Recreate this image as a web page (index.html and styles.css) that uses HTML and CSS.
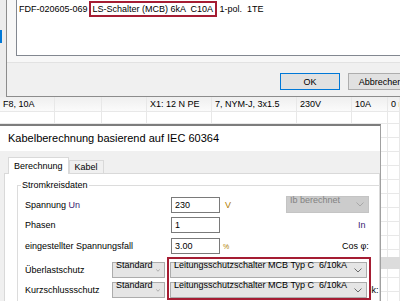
FILE: index.html
```html
<!DOCTYPE html>
<html lang="de">
<head>
  <meta charset="UTF-8" />
  <title>Kabelberechnung</title>
  <link rel="stylesheet" href="styles.css">
</head>
<body>

  <!-- Hintergrund: Tabelle der Hauptanwendung -->
  <div class="desk">
    <div class="desk-top"><span class="sel-mark"></span></div>
    <div class="grid-row first">
      <span>F8, 10A</span><span></span><span></span>
      <span>X1: 12 N PE</span><span>7, NYM-J, 3x1.5</span>
      <span>230V</span><span>10A</span><span>0 m</span>
    </div>
    <div class="grid-row second">
      <span></span><span></span><span></span><span></span>
      <span></span><span></span><span></span><span></span>
    </div>
    <div class="grid-fill">
      <span></span><span></span><span></span><span></span>
      <span></span><span></span><span></span><span></span>
    </div>
    <span class="desk-pill"></span>
  </div>

  <!-- Auswahl-Dialog -->
  <div class="dialog dlg-top">
    <div class="dlg-content">
      <div class="textbox">FDF-020605-069<span class="mark">LS-Schalter (MCB) 6kA  C10A</span> 1-pol.  1TE</div>
    </div>
    <div class="dlg-buttons">
      <button class="btn default">OK</button>
      <button class="btn">Abbrechen</button>
    </div>
  </div>

  <!-- Kabelberechnung -->
  <div class="dialog dlg-calc">
    <div class="calc-title">Kabelberechnung basierend auf IEC 60364</div>
    <div class="calc-body">
      <div class="tabs">
        <div class="tab active">Berechnung</div>
        <div class="tab">Kabel</div>
      </div>
      <div class="tab-page">
        <fieldset class="group">
          <legend>Stromkreisdaten</legend>

          <div class="row">
            <span class="label">Spannung <span class="sym">Un</span></span>
            <span class="input">230</span>
            <span class="unit">V</span>
            <span class="extra">
              <span class="combo disabled" style="margin-left:46px">Ib berechnet
                <svg width="8" height="5" viewBox="0 0 8 5"><path d="M0.5 0.5 L4 4 L7.5 0.5" fill="none" stroke="#a8a8a8"/></svg>
              </span>
            </span>
          </div>

          <div class="row">
            <span class="label">Phasen</span>
            <span class="input">1</span>
            <span class="unit"></span>
            <span class="extra"><span class="sym" style="margin-left:118px">In</span></span>
          </div>

          <div class="row">
            <span class="label">eingestellter Spannungsfall</span>
            <span class="input">3.00</span>
            <span class="unit small">%</span>
            <span class="extra"><span style="margin-left:102px">Cos φ:</span></span>
          </div>

          <div class="prot">
            <div class="prow">
              <span class="plabel">Überlastschutz</span>
              <span class="combo std">Standard
                <svg width="8" height="5" viewBox="0 0 8 5"><path d="M0.5 0.5 L4 4 L7.5 0.5" fill="none" stroke="#6b6b6b"/></svg>
              </span>
              <span class="combo long">Leitungsschutzschalter MCB Typ C  6/10kA
                <svg width="8" height="5" viewBox="0 0 8 5"><path d="M0.5 0.5 L4 4 L7.5 0.5" fill="none" stroke="#6b6b6b"/></svg>
              </span>
            </div>
            <div class="prow">
              <span class="plabel">Kurzschlussschutz</span>
              <span class="combo std">Standard
                <svg width="8" height="5" viewBox="0 0 8 5"><path d="M0.5 0.5 L4 4 L7.5 0.5" fill="none" stroke="#6b6b6b"/></svg>
              </span>
              <span class="combo long">Leitungsschutzschalter MCB Typ C  6/10kA
                <svg width="8" height="5" viewBox="0 0 8 5"><path d="M0.5 0.5 L4 4 L7.5 0.5" fill="none" stroke="#6b6b6b"/></svg>
              </span>
              <span class="ik">Ik:</span>
            </div>
            <span class="redbox"></span>
          </div>
        </fieldset>
      </div>
    </div>
  </div>

</body>
</html>
```

FILE: styles.css
```css
* {
  box-sizing: border-box;
}

body {
  margin: 0;
  width: 400px;
  height: 301px;
  overflow: hidden;
  position: relative;
  font-family: 'Liberation Sans', Arial, sans-serif;
  font-size: 9px;
  color: #000;
  background: #fff;
}

/* Hintergrund */
.desk {
  height: 301px;
}

.desk-top {
  position: relative;
  height: 97px;
  background: #ececec;
}

.sel-mark {
  position: absolute;
  left: 0;
  top: 30px;
  width: 2px;
  height: 13px;
  background: #0078d7;
}

.grid-row,
.grid-fill {
  display: grid;
  grid-template-columns: 55px 47px 45px 65px 85px 55px 36px 1fr;
}

.grid-row {
  border-bottom: 1px solid #e8e8e8;
}

.grid-row.first {
  height: 15px;
  background: linear-gradient(#efefef, #fbfbfb);
}

.grid-row.second {
  height: 12px;
}

.grid-row span,
.grid-fill span {
  border-right: 1px solid #e8e8e8;
  padding-left: 3px;
  line-height: 14px;
  white-space: nowrap;
  overflow: hidden;
}

.grid-fill {
  height: 177px;
  background: repeating-linear-gradient(to bottom, transparent 0 13px, #e8e8e8 13px 14px);
}

.desk-pill {
  position: absolute;
  left: 381px;
  top: 257px;
  width: 19px;
  height: 12px;
  background: #dcdcdc;
}

/* Dialoge */
.dialog {
  position: absolute;
  overflow: hidden;
}

.dlg-top {
  left: 6px;
  top: -40px;
  right: -20px;
  height: 137px;
  border: 1px solid #8c8c8c;
  background: #f7f7f7;
}

.dlg-content {
  padding: 10px 0 0 9px;
}

.textbox {
  height: 85px;
  border: 1px solid #828790;
  background: #fff;
  padding: 29px 0 0 2px;
  line-height: 16px;
  white-space: pre;
}

.mark {
  display: inline-block;
  line-height: 12px;
  border: 2px solid #a51d33;
  padding: 0 2px;
  margin-left: 1px;
}

.dlg-buttons {
  display: flex;
  justify-content: flex-end;
  gap: 8px;
  height: 34px;
  margin-top: 6px;
  padding: 10px 6px 0 0;
  border-top: 1px solid #e2e2e2;
  background: #f0f0f0;
}

.btn {
  width: 65px;
  height: 17px;
  padding: 0;
  font: inherit;
  color: #000;
  border: 1px solid #adadad;
  background: #e1e1e1;
}

.btn.default {
  width: 60px;
  border-color: #0078d7;
}

.dlg-calc {
  left: -1px;
  top: 124px;
  width: 382px;
  height: 190px;
  border: 1px solid #a0a0a0;
  border-top: 2px solid #7d7d7d;
  background: #f0f0f0;
}

.calc-title {
  height: 25px;
  line-height: 25px;
  padding-left: 8px;
  font-size: 11px;
  background: #fff;
}

.calc-body {
  padding: 6px 0 0 4px;
}

.tabs {
  display: flex;
  align-items: flex-end;
  height: 16px;
  padding-left: 4px;
}

.tab {
  position: relative;
  height: 13px;
  line-height: 12px;
  padding: 0 5px;
  border: 1px solid #d9d9d9;
  border-bottom: none;
  background: #f0f0f0;
}

.tab.active {
  z-index: 1;
  height: 17px;
  line-height: 16px;
  margin-bottom: -1px;
  background: #fff;
}

.tab-page {
  height: 140px;
  border: 1px solid #d9d9d9;
  background: #fff;
  padding: 5px 0 0 12px;
}

.group {
  width: 420px;
  margin: 0;
  padding: 0 0 0 7px;
  border: 1px solid #dcdcdc;
}

.group legend {
  margin-left: -4px;
  padding: 0 1px;
  line-height: 12px;
}

.row {
  display: grid;
  grid-template-columns: 146px 49px 20px 1fr;
  align-items: center;
  height: 16px;
  margin-top: 5px;
}

.sym {
  color: #3b2170;
}

.input {
  height: 16px;
  line-height: 14px;
  padding-left: 3px;
  border: 1px solid #7a7a7a;
  background: #fff;
}

.unit {
  padding-left: 5px;
  color: #b07d00;
}

.unit.small {
  padding-left: 3px;
  font-size: 7px;
}

.extra {
  display: flex;
  align-items: center;
}

.combo {
  display: flex;
  align-items: center;
  justify-content: space-between;
  height: 16px;
  padding: 0 4px 0 3px;
  border: 1px solid #acacac;
  background: #e5e5e5;
  white-space: pre;
}

.combo.disabled {
  width: 83px;
  height: 17px;
  color: #838383;
  border-color: #c4c4c4;
  background: #cccccc;
}

.prot {
  position: relative;
  padding-top: 8px;
}

.prow {
  display: flex;
  align-items: center;
  height: 16px;
  margin-bottom: 4px;
}

.plabel {
  width: 87px;
}

.combo.std {
  width: 53px;
}

.combo.long {
  width: 197px;
  margin-left: 5px;
}

.ik {
  margin-left: 2px;
}

.redbox {
  position: absolute;
  left: 142px;
  top: 3px;
  width: 204px;
  height: 43px;
  border: 2px solid #a51d33;
}
```
